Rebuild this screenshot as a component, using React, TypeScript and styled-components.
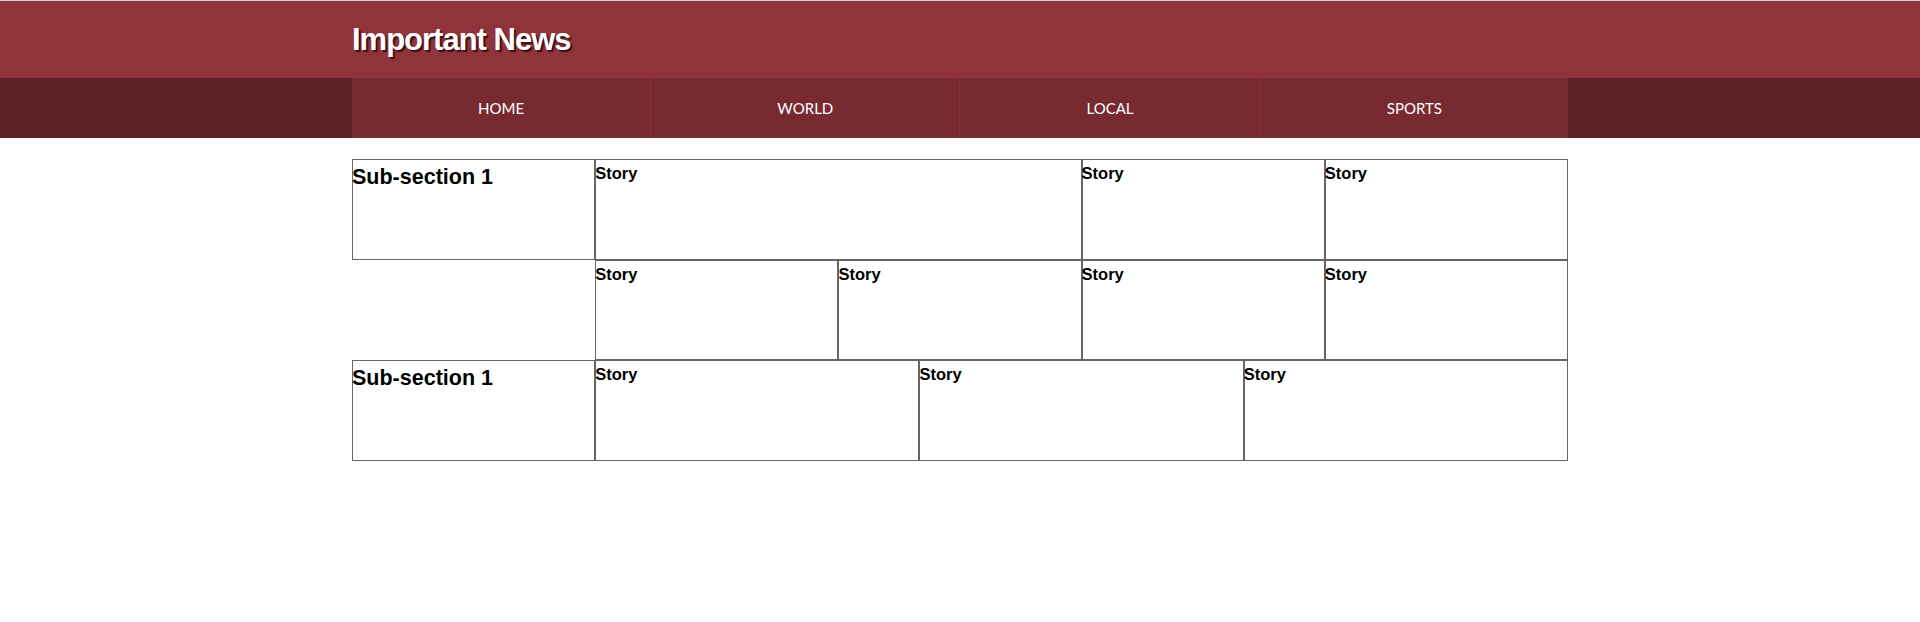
import { Fragment } from "react";
import styled, { createGlobalStyle } from "styled-components";

const GlobalStyle = createGlobalStyle`
  html, body {
    margin: 0;
    padding: 0;
    background: #ffffff;
  }
  body {
    font-family: "Liberation Sans", Arial, sans-serif;
  }
`;

const COLORS = {
  header: "#8f343b",
  navOuter: "#5e2127",
  navInner: "#772a30",
  navLine: "#8a3039",
  border: "#666666",
};

const Header = styled.header`
  background-color: ${COLORS.header};
  border-top: 1px solid #d9cfd0;
  height: 77px;
`;

const Container = styled.div`
  width: 1216px;
  margin: 0 auto;
`;

const HeaderInner = styled(Container)`
  height: 100%;
  display: flex;
  align-items: center;
`;

const Title = styled.h1`
  margin: 0;
  font-family: "Liberation Sans", Arial, sans-serif;
  font-size: 31px;
  font-weight: 700;
  letter-spacing: -1px;
  color: #ffffff;
  text-shadow: 2px 2px 1px #3a1014;
`;

const Nav = styled.nav`
  background-color: ${COLORS.navOuter};
  height: 60px;
`;

const NavList = styled(Container)`
  display: flex;
  height: 100%;
  background-color: ${COLORS.navInner};
`;

const NavItem = styled.a`
  flex: 1 1 auto;
  display: flex;
  align-items: center;
  justify-content: center;
  font-family: Lato, "Open Sans", sans-serif;
  font-size: 15px;
  color: #ffffff;
  text-decoration: none;

  & + & {
    border-left: 1px solid ${COLORS.navLine};
  }
`;

const Board = styled(Container)`
  margin-top: 21px;
  display: grid;
  grid-template-columns: repeat(15, 1fr);
  grid-auto-rows: 100.5px;
`;

interface CellProps {
  $span: number;
  $blank?: boolean;
}

const Cell = styled.div<CellProps>`
  grid-column: span ${({ $span }) => $span};
  box-sizing: border-box;
  border: ${({ $blank }) => ($blank ? "none" : `1px solid ${COLORS.border}`)};
  padding-top: 4px;
  color: #000000;
`;

const SubTit = styled.h2`
  margin: 1px 0 0 -1px;
  font-size: 21.5px;
  font-weight: 700;
  line-height: 1.15;
`;

const StoryTit = styled.h3`
  margin: 0 0 0 -1px;
  font-size: 16.5px;
  font-weight: 700;
  line-height: 1.15;
`;

const navLinks = ["HOME", "WORLD", "LOCAL", "SPORTS"];

// each row: subsection label (or blank), then story spans out of 15 columns
const rows: { sub: string | null; stories: number[] }[] = [
  { sub: "Sub-section 1", stories: [6, 3, 3] },
  { sub: null, stories: [3, 3, 3, 3] },
  { sub: "Sub-section 1", stories: [4, 4, 4] },
];

const App = () => {
  return (
    <>
      <GlobalStyle />
      <Header>
        <HeaderInner>
          <Title>Important News</Title>
        </HeaderInner>
      </Header>
      <Nav>
        <NavList>
          {navLinks.map((link) => (
            <NavItem key={link} href="#">
              {link}
            </NavItem>
          ))}
        </NavList>
      </Nav>

      <Board>
        {rows.map((row, r) => (
          <Fragment key={r}>
            {row.sub ? (
              <Cell $span={3}>
                <SubTit>{row.sub}</SubTit>
              </Cell>
            ) : (
              <Cell $span={3} $blank />
            )}
            {row.stories.map((span, i) => (
              <Cell key={i} $span={span}>
                <StoryTit>Story</StoryTit>
              </Cell>
            ))}
          </Fragment>
        ))}
      </Board>
    </>
  );
};

export default App;
